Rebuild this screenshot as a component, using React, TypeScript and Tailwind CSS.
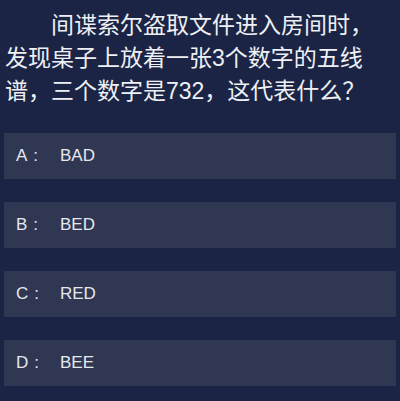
export default function App() {
  const opts = [
    ["A", "BAD"],
    ["B", "BED"],
    ["C", "RED"],
    ["D", "BEE"],
  ];
  return (
    <div
      className="w-[400px] h-[401px] bg-[#1b2444] overflow-hidden text-[#eef0f5]"
      style={{ fontFamily: '"Liberation Sans", "Noto Sans CJK SC", sans-serif' }}
    >
      <div className="pl-[5px] pt-[9px] w-[382px] text-[23px] leading-[33px] indent-[46px]">
        间谍索尔盗取文件进入房间时，发现桌子上放着一张3个数字的五线谱，三个数字是732，这代表什么？
      </div>
      <div className="mt-[25px] px-[4px] flex flex-col gap-[23px]">
        {opts.map(([k, v]) => (
          <div key={k} className="h-[46px] bg-[#2f3752] flex items-center text-[17px] text-[#e6e8ee]">
            <span className="pl-[12px] w-[56px] flex">
              <span>{k}</span>
              <span className="ml-[6px]">:</span>
            </span>
            <span>{v}</span>
          </div>
        ))}
      </div>
    </div>
  );
}
